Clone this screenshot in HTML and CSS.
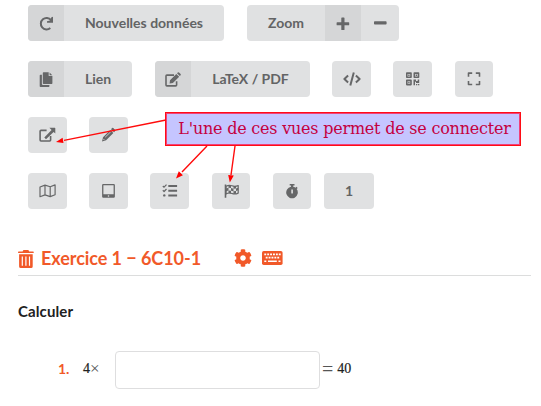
FILE: index.html
```
<!DOCTYPE html>
<html lang="fr">
<head>
<meta charset="utf-8">
<title>Exercice</title>
<link rel="stylesheet" href="styles.css">
</head>
<body>
<main class="page">
  <div class="toolbar">
    <div class="row">
      <button class="btn labeled wide-data"><span class="side"><svg class="ic" viewBox="0 0 18 18"><path class="s2" d="M14 6.2A5.7 5.7 0 1 0 13.3 14"/><path d="M16 2.8V8.8H10V7.2L13 6.5 14.4 3.2Z"/></svg></span><span class="label">Nouvelles données</span></button>
      <div class="zoom">
        <span class="label">Zoom</span>
        <button class="side"><svg class="ic" viewBox="0 0 18 18"><path d="M7.3 4.2Q7.3 3.6 7.9 3.6H9.9Q10.5 3.6 10.5 4.2V8.2H14.6Q15.2 8.2 15.2 8.8V10.7Q15.2 11.3 14.6 11.3H10.5V15.4Q10.5 16 9.9 16H7.9Q7.3 16 7.3 15.4V11.3H3.2Q2.6 11.3 2.6 10.7V8.8Q2.6 8.2 3.2 8.2H7.3Z"/></svg></button>
        <button class="minus"><svg class="ic" viewBox="0 0 18 18"><rect x="4" y="7.3" width="12.6" height="3.3" rx=".8"/></svg></button>
      </div>
    </div>
    <div class="row">
      <button class="btn labeled wide-link"><span class="side"><svg class="ic" viewBox="0 0 18 18"><path d="M6.5 2.3H11.7V6H15.4V13.2Q15.4 14 14.6 14H6.5Q5.8 14 5.8 13.2V3Q5.8 2.3 6.5 2.3ZM12.6 2.5 15.3 5.2H12.6ZM2.7 5.5Q2.7 4.7 3.5 4.7H4.9V13.8Q4.9 15 6 15H12.4V16.2Q12.4 17 11.6 17H3.5Q2.7 17 2.7 16.2Z"/></svg></span><span class="label">Lien</span></button>
      <button class="btn labeled wide-latex"><span class="side"><svg class="ic" viewBox="0 0 18 18"><path class="s" d="M10 5.1H2.9Q2 5.1 2 6V15Q2 15.9 2.9 15.9H11.7Q12.6 15.9 12.6 15V11.3"/><path d="M6 10.2 12.3 3.9 15.2 6.8 8.9 13.1 5.6 13.5ZM13 3.2 13.8 2.5Q14.4 2 15 2.5L16.6 4.1Q17.1 4.7 16.6 5.3L15.8 6.1Z"/></svg></span><span class="label">LaTeX / PDF</span></button>
      <button class="btn icon"><svg class="ic w" viewBox="0 0 19 18"><path class="s2" d="M6.1 5.6 2.4 9.1 6.1 12.6M13.9 5.6 17.6 9.1 13.9 12.6M11.8 2.6 8.3 15.5"/></svg></button>
      <button class="btn icon"><svg class="ic w" viewBox="0 0 19 18"><path class="s" d="M3.8 3.1H8V7.3H3.8ZM11.3 3.1H15.5V7.3H11.3ZM3.8 10.4H8V14.6H3.8Z"/><path d="M5.2 4.5h1.4v1.4H5.2ZM12.7 4.5h1.4v1.4h-1.4ZM5.2 11.8h1.4v1.4H5.2ZM10.5 9.6H13V11H14.7V9.6H16.2V13H13V11.7H12V15.3H10.5ZM13 14h1.3v1.3H13ZM15 14h1.3v1.3H15Z"/></svg></button>
      <button class="btn icon small"><svg class="ic w" viewBox="0 0 19 18"><path class="s" d="M3.5 6.7V3.1H7.2M10.8 3.1H14.5V6.7M14.5 10.9V14.5H10.8M7.2 14.5H3.5V10.9"/></svg></button>
    </div>
    <div class="row">
      <button class="btn icon"><svg class="ic w" viewBox="0 0 19 18"><path class="s" d="M8.6 4.4H3Q2.1 4.4 2.1 5.3V14.1Q2.1 15 3 15H11.7Q12.6 15 12.6 14.1V10"/><path d="M11.4 1.8H16.8Q17.3 1.8 17.3 2.3V7.6L15.6 6 8 13.2 6.3 11.5 13.6 4Z"/></svg></button>
      <button class="btn icon"><svg class="ic w" viewBox="0 0 19 18"><path d="M4 11.2 11.3 3.9 14.4 7 7.1 14.3 3 15.6ZM12 3.2 13.1 2.1Q13.7 1.5 14.3 2.1L16.1 3.9Q16.7 4.5 16.1 5.1L15.1 6.2Z"/><path class="gap" d="M6.2 11.2 11.8 5.7M4.3 12.9 5.4 14"/></svg></button>
    </div>
    <div class="row">
      <button class="btn icon"><svg class="ic w" viewBox="0 0 19 18"><path class="thin" d="M2 5 7 3.1 12.2 4.7 17.1 2.9V12.7L12.2 14.6 7 12.9 2 14.7ZM7 3.1V12.9M12.2 4.7V14.6"/></svg></button>
      <button class="btn icon"><svg class="ic w" viewBox="0 0 19 18"><path fill-rule="evenodd" d="M4.3 1.9H14.7Q15.9 1.9 15.9 3.1V14.5Q15.9 15.7 14.7 15.7H4.3Q3.1 15.7 3.1 14.5V3.1Q3.1 1.9 4.3 1.9ZM4.4 3.2V12.3H14.6V3.2ZM8.7 14a.8.8 0 1 0 1.6 0 .8.8 0 1 0-1.6 0Z"/></svg></button>
      <button class="btn icon"><svg class="ic w" viewBox="0 0 19 18"><path class="thin" d="M2.8 4 4.1 5.2 6.5 2.7M2.8 8.3 4.1 9.5 6.5 7"/><circle cx="4.3" cy="13.4" r="1.2"/><path d="M8.3 3.1H17.1V5H8.3ZM8.3 7.8H17.1V9.7H8.3ZM8.3 12.5H17.1V14.4H8.3Z"/></svg></button>
      <button class="btn icon small flag"><svg class="ic w" viewBox="0 0 19 18"><path class="s" d="M3.5 2.5V15.7"/><path class="thin" d="M4 4.2Q7 2.6 10 3.8T16.2 3.5V11.1Q13 12.7 10 11.5T4 12Z"/><path d="M6.5 3.3 9 3.5V6.1L6.5 5.8ZM11.5 4.2 14 4.1V6.5L11.5 6.7ZM4 6.5 6.5 5.8V8.6L4 9.2ZM9 6.1 11.5 6.7V9.2L9 8.7ZM14 6.5 16.2 5.7V8.3L14 9ZM6.5 8.6 9 8.7V11.4L6.5 11.2ZM11.5 9.2 14 9V11.7L11.5 12Z"/></svg></button>
      <button class="btn icon small"><svg class="ic w" viewBox="0 0 19 18"><path fill-rule="evenodd" d="M6.7 2H11.5V3.6H10.2V4.8Q11.4 5 12.4 5.8L13.4 4.7 14.7 6 13.7 7.1A5.8 5.8 0 1 1 8 4.8V3.6H6.7ZM8.3 7.4V11.1Q8.3 11.6 8.8 11.6H9.4Q9.9 11.6 9.9 11.1V7.4Z"/></svg></button>
      <button class="btn count">1</button>
    </div>
    <div class="callout">L'une de ces vues permet de se connecter</div>
    <svg class="arrows" viewBox="0 0 541 210"><path class="shaft" d="M166 120 64 140.4M207 146 182 172M235 146 231 175"/><path class="tip" d="M56 142 62.6 137.8 63.5 143.1ZM176 178.5 178.8 171.3 182.9 175.2ZM229.8 182.5 228.2 174.9 233.8 175.6Z"/></svg>
  </div>

  <section class="exercise">
    <h3 class="title">
      <svg class="trash" viewBox="0 0 16 18"><path fill-rule="evenodd" d="M.6 1.4H4.6L5.2.3Q5.4 0 5.8 0H10Q10.4 0 10.6.3L11.2 1.4H15.2Q15.7 1.4 15.7 1.9V3.1H.1V1.9Q.1 1.4.6 1.4ZM1.1 4.3H14.7V16.4Q14.7 18 13.1 18H2.8Q1.1 18 1.1 16.4ZM3.7 6.6V15.8H4.9V6.6ZM7.3 6.6V15.8H8.5V6.6ZM10.9 6.6V15.8H12.1V6.6Z"/></svg>
      <span class="name">Exercice 1 − 6C10-1</span>
      <svg class="gear" viewBox="0 0 512 512"><path d="M487.4 315.7l-42.6-24.6c4.3-23.2 4.3-47 0-70.2l42.6-24.6c4.9-2.8 7.1-8.6 5.5-14-11.1-35.6-30-67.8-54.7-94.6-3.8-4.1-10-5.1-14.8-2.3L380.8 110c-17.9-15.4-38.5-27.3-60.8-35.1V25.8c0-5.6-3.9-10.5-9.4-11.7-36.7-8.2-74.3-7.8-109.2 0-5.5 1.2-9.4 6.1-9.4 11.7V75c-22.2 7.9-42.8 19.8-60.8 35.1L88.7 85.5c-4.9-2.8-11-1.9-14.8 2.3-24.7 26.7-43.6 58.9-54.7 94.6-1.7 5.4.6 11.2 5.5 14L67.3 221c-4.3 23.2-4.3 47 0 70.2l-42.6 24.6c-4.9 2.8-7.1 8.6-5.5 14 11.1 35.6 30 67.8 54.7 94.6 3.8 4.1 10 5.1 14.8 2.3l42.6-24.6c17.9 15.4 38.5 27.3 60.8 35.1v49.2c0 5.6 3.9 10.5 9.4 11.7 36.7 8.2 74.3 7.8 109.2 0 5.5-1.2 9.4-6.1 9.4-11.7v-49.2c22.2-7.9 42.8-19.8 60.8-35.1l42.6 24.6c4.9 2.8 11 1.9 14.8-2.3 24.7-26.7 43.6-58.9 54.7-94.6 1.5-5.5-.7-11.3-5.6-14.1zM256 336c-44.1 0-80-35.9-80-80s35.9-80 80-80 80 35.9 80 80-35.9 80-80 80z"/></svg>
      <svg class="keyboard" viewBox="0 0 21 14"><rect width="20.6" height="14" rx="1.7"/><path class="keys" d="M2.3 3.3H18.7M3.7 6.6H17.4"/><path class="space" d="M2.3 10.3H4.3M6 10.3H14.8M16.5 10.3H18.5"/></svg>
    </h3>
    <p class="instruction">Calculer</p>
    <div class="question">
      <span class="num">1.</span>
      <span class="math left">4<span class="times">×</span></span>
      <input class="answer" type="text" aria-label="Réponse">
      <span class="math right"><span class="equals">=</span>40</span>
    </div>
  </section>
</main>
</body>
</html>
```
FILE: styles.css
```
* { box-sizing: border-box; }
body { margin: 0; background: #fff; color: #212121; font-family: Lato, "Liberation Sans", sans-serif; font-size: 14px; overflow: hidden; }
.page { width: 541px; height: 406px; }
.toolbar { position: relative; display: flex; flex-direction: column; gap: 20px; padding: 5px 0 0 28px; }
.row { display: flex; height: 36px; }
button { border: 0; margin: 0; padding: 0; font: inherit; color: inherit; background: none; }
.btn, .zoom { display: flex; align-items: stretch; height: 36px; border-radius: 4px; overflow: hidden; background: #e0e1e2; color: #636465; font-weight: 700; margin-right: 22px; flex: none; }
.labeled { margin-right: 23px; }
.wide-data { width: 196px; }
.wide-link { width: 104px; }
.wide-latex { width: 155px; margin-right: 22px; }
.side { width: 36px; display: flex; align-items: center; justify-content: center; background: #d5d6d7; flex: none; }
.label { flex: 1; display: flex; align-items: center; justify-content: center; white-space: nowrap; padding-bottom: 2px; }
.zoom { width: 152px; margin-right: 0; }
.minus { width: 38px; padding-left: 9px; display: flex; align-items: center; }
.icon { width: 39px; padding: 9px 10px; }
.small { width: 38px; margin-right: 13px; }
.icon + .small { margin-left: 1px; }
.small + .small { margin-left: 0; }
.flag { margin-right: 23px; }
.count { width: 50px; align-items: center; justify-content: center; margin-right: 0; padding-bottom: 2px; }
.ic { display: block; width: 18px; height: 18px; flex: none; fill: #666768; }
.w { width: 19px; }
.s, .s2, .thin { fill: none; stroke: #666768; stroke-width: 1.6; stroke-linejoin: round; }
.s2 { stroke-width: 2; }
.thin { stroke-width: 1.2; }
.gap { fill: none; stroke: #e0e1e2; stroke-width: .8; }
.callout { position: absolute; left: 165px; top: 112px; width: 356px; height: 34px; border: 1px solid #ff0c14; box-shadow: inset 0 0 0 1px #f0407a; background: #c5c5ff; color: #c4003f; font: 16px/32px "DejaVu Serif", serif; letter-spacing: -.22px; text-align: center; white-space: nowrap; padding-left: 3px; }
.arrows { position: absolute; left: 0; top: 0; width: 541px; height: 210px; pointer-events: none; }
.shaft { stroke: #ff0c0c; stroke-width: 1.4; fill: none; }
.tip { fill: #ff0000; }
.exercise { margin: 36px 10px 0 18px; }
.title { display: flex; align-items: center; height: 31px; margin: 0; padding-bottom: 4px; border-bottom: 1px solid #dcdddd; color: #f15929; font-size: 18px; letter-spacing: -.06px; line-height: 24px; font-weight: 700; }
.title svg { fill: currentColor; flex: none; }
.trash { width: 16px; height: 18px; margin-top: 2px; }
.name { width: 192px; margin-left: 7px; white-space: nowrap; }
.gear { width: 18px; height: 18px; margin-left: 1px; }
.keyboard { width: 21px; height: 14px; margin-left: 10px; }
.keys, .space { stroke: #fff; stroke-width: 1.7; stroke-dasharray: 1.9 1; fill: none; }
.space { stroke-dasharray: none; stroke-width: 1.6; }
.instruction { margin: 25px 0 0; font-size: 15px; letter-spacing: .1px; line-height: 20px; font-weight: 700; }
.question { display: flex; align-items: center; height: 38px; margin-top: 30px; padding-left: 40px; }
.num { width: 25px; padding-bottom: 3px; color: #f15929; font-weight: 700; }
.math { display: flex; align-items: center; font: 14px/20px "Liberation Serif", serif; white-space: nowrap; padding-bottom: 2px; -webkit-text-stroke: .2px #212121; }
.left { width: 32px; }
.times { font-size: 17px; color: #555; -webkit-text-stroke: 0; }
.answer { width: 205px; height: 38px; border: 1px solid #dededf; border-radius: 4px; padding: 0 14px; background: #fff; }
.right { margin-left: 2px; gap: 4px; }
.equals { font-size: 20px; color: #555; -webkit-text-stroke: 0; }
```
